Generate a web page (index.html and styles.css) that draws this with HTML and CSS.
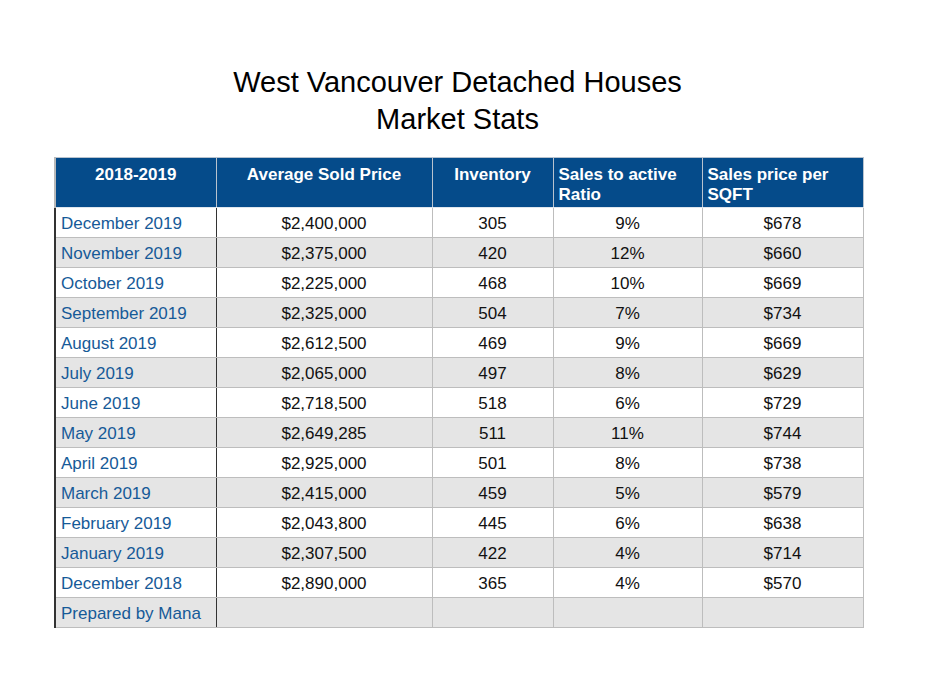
FILE: index.html
```html
<!DOCTYPE html>
<html>
<head>
<meta charset="utf-8">
<link rel="stylesheet" href="styles.css">
</head>
<body>
<div class="page">
  <h1 class="title">West Vancouver Detached Houses<br>Market Stats</h1>
  <table class="stats">
    <colgroup>
      <col class="c1"><col class="c2"><col class="c3"><col class="c4"><col class="c5">
    </colgroup>
    <thead>
      <tr>
        <th class="center">2018-2019</th>
        <th class="center">Average Sold Price</th>
        <th class="center">Inventory</th>
        <th class="left">Sales to active Ratio</th>
        <th class="left">Sales price per SQFT</th>
      </tr>
    </thead>
    <tbody>
      <tr><td class="month">December 2019</td><td>$2,400,000</td><td>305</td><td>9%</td><td>$678</td></tr>
      <tr class="alt"><td class="month">November 2019</td><td>$2,375,000</td><td>420</td><td>12%</td><td>$660</td></tr>
      <tr><td class="month">October 2019</td><td>$2,225,000</td><td>468</td><td>10%</td><td>$669</td></tr>
      <tr class="alt"><td class="month">September 2019</td><td>$2,325,000</td><td>504</td><td>7%</td><td>$734</td></tr>
      <tr><td class="month">August 2019</td><td>$2,612,500</td><td>469</td><td>9%</td><td>$669</td></tr>
      <tr class="alt"><td class="month">July 2019</td><td>$2,065,000</td><td>497</td><td>8%</td><td>$629</td></tr>
      <tr><td class="month">June 2019</td><td>$2,718,500</td><td>518</td><td>6%</td><td>$729</td></tr>
      <tr class="alt"><td class="month">May 2019</td><td>$2,649,285</td><td>511</td><td>11%</td><td>$744</td></tr>
      <tr><td class="month">April 2019</td><td>$2,925,000</td><td>501</td><td>8%</td><td>$738</td></tr>
      <tr class="alt"><td class="month">March 2019</td><td>$2,415,000</td><td>459</td><td>5%</td><td>$579</td></tr>
      <tr><td class="month">February 2019</td><td>$2,043,800</td><td>445</td><td>6%</td><td>$638</td></tr>
      <tr class="alt"><td class="month">January 2019</td><td>$2,307,500</td><td>422</td><td>4%</td><td>$714</td></tr>
      <tr><td class="month">December 2018</td><td>$2,890,000</td><td>365</td><td>4%</td><td>$570</td></tr>
      <tr class="alt"><td class="month">Prepared by Mana</td><td></td><td></td><td></td><td></td></tr>
    </tbody>
  </table>
</div>
</body>
</html>
```
FILE: styles.css
```css
html, body {
  margin: 0;
  padding: 0;
  background: #ffffff;
}
body {
  font-family: "Liberation Sans", Arial, sans-serif;
  color: #111111;
}
.page {
  width: 934px;
  padding-top: 64px;
}
.title {
  margin: 0 0 19px 0;
  font-weight: normal;
  font-size: 29px;
  line-height: 37px;
  text-align: center;
  color: #000000;
  padding-right: 19px;
}
.stats {
  margin-left: 54px;
  border-collapse: collapse;
  table-layout: fixed;
  width: 808px;
  font-size: 17px;
}
.c1 { width: 161px; }
.c2 { width: 216px; }
.c3 { width: 121px; }
.c4 { width: 149px; }
.c5 { width: 161px; }
.stats th {
  background: #054b8a;
  color: #ffffff;
  font-weight: bold;
  height: 50px;
  box-sizing: border-box;
  vertical-align: top;
  padding: 7px 5px 0 5px;
  line-height: 20px;
  border: 1px solid #b9c3ce;
  border-bottom: 1px solid #dfe6ee;
}
.stats th.center { text-align: center; }
.stats th.left { text-align: left; }
.stats td {
  height: 30px;
  box-sizing: border-box;
  padding: 2px 5px 0 5px;
  text-align: center;
  border: 1px solid #bdbdbd;
  line-height: 20px;
}
.stats tr.alt td {
  background: #e5e5e5;
}
.stats td.month {
  text-align: left;
  color: #165a98;
  border-left: 2px solid #333333;
  border-right: 1px solid #333333;
}
.stats th:first-child {
  border-left: 2px solid #b9b9b9;
}
```
